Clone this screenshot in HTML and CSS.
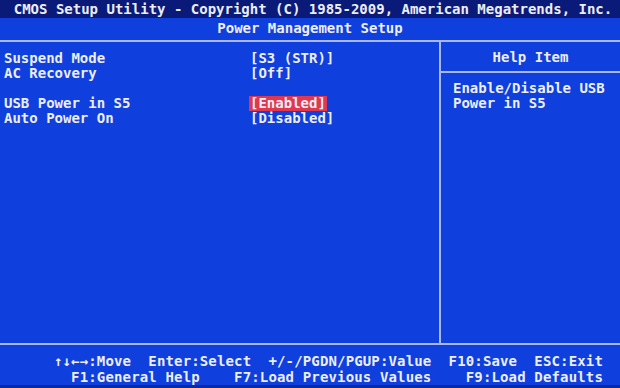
FILE: index.html
```html
<!DOCTYPE html>
<html lang="en">
<head>
  <meta charset="UTF-8">
  <title>CMOS Setup Utility</title>
  <link rel="stylesheet" href="styles.css">
</head>
<body>

<div class="screen">
  <div class="title">CMOS Setup Utility - Copyright (C) 1985-2009, American Megatrends, Inc.</div>
  <div class="subtitle">Power Management Setup</div>

  <div class="main">
    <div class="options">
      <div class="row"><span class="label">Suspend Mode</span><span class="value">[S3 (STR)]</span></div>
      <div class="row"><span class="label">AC Recovery</span><span class="value">[Off]</span></div>
      <div class="row"></div>
      <div class="row"><span class="label">USB Power in S5</span><span class="value selected">[Enabled]</span></div>
      <div class="row"><span class="label">Auto Power On</span><span class="value">[Disabled]</span></div>
    </div>

    <div class="help">
      <div class="help-title">Help Item</div>
      <div class="help-text">
        <div>Enable/Disable USB</div>
        <div>Power in S5</div>
      </div>
    </div>
  </div>

  <!-- teclas -->
  <div class="footer">
    <div class="keys">↑↓←→:Move  Enter:Select  +/-/PGDN/PGUP:Value  F10:Save  ESC:Exit</div>
    <div class="keys">F1:General Help    F7:Load Previous Values    F9:Load Defaults</div>
  </div>
</div>

</body>
</html>
```

FILE: styles.css
```css
* {
  box-sizing: border-box;
  margin: 0;
  padding: 0;
}

body {
  background-color: #0b1a6e;
  font-family: "DejaVu Sans Mono", "Liberation Mono", monospace;
  font-weight: bold;
  font-size: 14px;
  color: #eceef8;
  width: 620px;
  height: 388px;
  overflow: hidden;
}

.screen {
  display: flex;
  flex-direction: column;
  height: 388px;
  background-color: #0f3fdc;
}

.title {
  background-color: #0a1a78;
  height: 18px;
  line-height: 19px;
  padding-left: 6px;
  text-align: center;
  white-space: pre;
}

.subtitle {
  height: 24px;
  line-height: 20px;
  text-align: center;
  border-bottom: 2px solid #a9b9f0;
}

.main {
  display: flex;
  height: 303px;
  border-bottom: 2px solid #a9b9f0;
}

.options {
  width: 441px;
  padding: 9px 0 0 4px;
  border-right: 2px solid #a9b9f0;
}

.row {
  display: flex;
  height: 15px;
  line-height: 15px;
}

.label {
  width: 245px;
  white-space: pre;
}

.value {
  white-space: pre;
  padding: 0 1px;
}

.selected {
  background-color: #e0384e;
}

.help {
  flex: 1;
}

.help-title {
  height: 31px;
  line-height: 31px;
  text-align: center;
  border-bottom: 2px solid #a9b9f0;
}

.help-text {
  padding: 8px 0 0 12px;
  line-height: 15px;
}

.footer {
  flex: 1;
  padding: 8px 17px 0 0;
  background-color: #0f3fdc;
  border-bottom: 3px solid #0b2aa0;
}

.keys {
  height: 16px;
  line-height: 16px;
  text-align: right;
  white-space: pre;
  letter-spacing: 0.15px;
}
```
